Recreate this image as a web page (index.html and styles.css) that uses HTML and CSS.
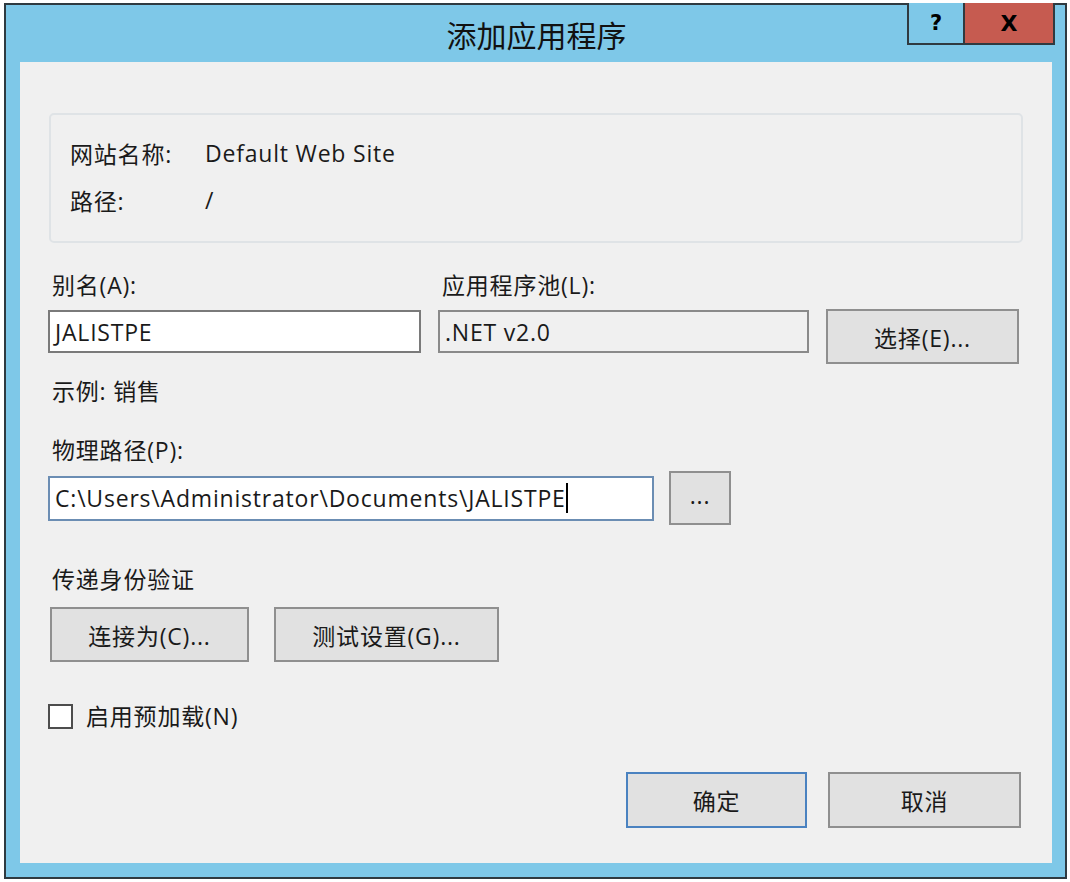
FILE: index.html
```html
<!DOCTYPE html>
<html lang="zh-CN">
<head>
<meta charset="utf-8">
<title>添加应用程序</title>
<link rel="stylesheet" href="styles.css">
</head>
<body>
<div class="window">
  <div class="titlebar">
    <div class="spacer"></div>
    <div class="title">添加应用程序</div>
    <div class="controls">
      <div class="ctl help">?</div>
      <div class="ctl close">X</div>
    </div>
  </div>
  <div class="content">
    <div class="infobox">
      <div class="info-label">网站名称:</div><div class="info-value">Default Web Site</div>
      <div class="info-label">路径:</div><div class="info-value">/</div>
    </div>

    <div class="grid-row">
      <div class="label">别名(A):</div>
      <div class="label">应用程序池(L):</div>
      <div></div>
      <div class="input">JALISTPE</div>
      <div class="input readonly">.NET v2.0</div>
      <div class="btn btn-select">选择(E)...</div>
    </div>

    <div class="label example">示例: 销售</div>

    <div class="label path-label">物理路径(P):</div>
    <div class="path-row">
      <div class="input path focused">C:\Users\Administrator\Documents\JALISTPE<span class="caret"></span></div>
      <div class="btn btn-browse">...</div>
    </div>

    <div class="label auth-label">传递身份验证</div>
    <div class="auth-row">
      <div class="btn btn-connect">连接为(C)...</div>
      <div class="btn btn-test">测试设置(G)...</div>
    </div>

    <div class="check-row">
      <div class="checkbox"></div>
      <div class="label">启用预加载(N)</div>
    </div>

    <div class="footer">
      <div class="btn btn-ok">确定</div>
      <div class="btn btn-cancel">取消</div>
    </div>
  </div>
</div>
</body>
</html>
```

FILE: styles.css
```css
html, body {
  margin: 0;
  padding: 0;
  background: #ffffff;
}
body {
  font-family: "Open Sans", "Noto Sans CJK SC", sans-serif;
  font-size: 23px;
  letter-spacing: 0.8px;
  color: #1a1a1a;
}
.window {
  margin: 3px 0 0 4px;
  width: 1063px;
  height: 876px;
  box-sizing: border-box;
  border: 2px solid #2f3a40;
  background: #7ec8e8;
  padding: 0 13px 14px 14px;
  display: flex;
  flex-direction: column;
}
.titlebar {
  height: 57px;
  display: grid;
  grid-template-columns: 1fr auto 1fr;
  align-items: center;
  margin: 0 -13px 0 -14px;
}
.title {
  font-family: "Noto Sans CJK SC", sans-serif;
  font-size: 30px;
  color: #111;
  letter-spacing: 0;
  padding-left: 2px;
}
.controls {
  justify-self: end;
  align-self: start;
  display: flex;
  margin-top: -2px;
  margin-right: 10px;
}
.ctl {
  height: 42px;
  box-sizing: border-box;
  display: flex;
  align-items: center;
  justify-content: center;
  font-family: "DejaVu Sans", sans-serif;
  font-weight: bold;
  letter-spacing: 0;
  color: #000;
  border: 2px solid #2f3a40;
  border-top: none;
}
.help {
  width: 56px;
  background: #7ec8e8;
  font-size: 21px;
  border-right: none;
}
.close {
  width: 92px;
  background: #c65b50;
  font-size: 22px;
}
.content {
  flex: 1;
  background: #f0f0f0;
  padding: 51px 31px 0 28px;
  display: flex;
  flex-direction: column;
}
.infobox {
  margin-left: 1px;
  width: 974px;
  height: 130px;
  box-sizing: border-box;
  border: 2px solid #dfe3e6;
  border-radius: 5px;
  padding: 14px 0 0 19px;
  display: grid;
  grid-template-columns: 135px 1fr;
  grid-auto-rows: 47px;
  align-items: center;
}
.label {
  line-height: 30px;
  padding-left: 4px;
}
.grid-row {
  margin-top: 27px;
  display: grid;
  grid-template-columns: 373px 371px 193px;
  column-gap: 17px;
  row-gap: 10px;
  align-items: start;
}
.input {
  height: 43px;
  box-sizing: border-box;
  border: 2px solid #7a7a7a;
  background: #ffffff;
  padding-left: 5px;
  display: flex;
  align-items: center;
  white-space: nowrap;
}
.input.readonly {
  background: #f0f0f0;
  border-color: #8a8a8a;
}
.btn {
  box-sizing: border-box;
  height: 55px;
  background: #e1e1e1;
  border: 2px solid #8f8f8f;
  display: flex;
  align-items: center;
  justify-content: center;
  white-space: nowrap;
}
.btn-select {
  margin-top: -1px;
}
.example {
  margin-top: 12px;
}
.path-label {
  margin-top: 29px;
}
.path-row {
  margin-top: 6px;
  display: flex;
  align-items: center;
  gap: 15px;
}
.input.path {
  width: 606px;
  height: 45px;
  border-color: #6b8db3;
}
.caret {
  display: inline-block;
  width: 2px;
  height: 30px;
  background: #000;
  margin-left: 0;
}
.btn-browse {
  width: 62px;
  height: 54px;
  padding-bottom: 6px;
}
.auth-label {
  margin-top: 39px;
}
.auth-row {
  margin-top: 13px;
  margin-left: 2px;
  display: flex;
  gap: 25px;
}
.btn-connect { width: 199px; }
.btn-test { width: 225px; }
.check-row {
  margin-top: 39px;
  display: flex;
  align-items: center;
  gap: 9px;
}
.checkbox {
  width: 25px;
  height: 25px;
  box-sizing: border-box;
  border: 2px solid #4d4d4d;
  background: #fff;
}
.footer {
  margin-top: 41px;
  display: flex;
  justify-content: flex-end;
  gap: 21px;
}
.btn-ok {
  width: 181px;
  height: 56px;
  border-color: #4a82c0;
}
.btn-cancel {
  width: 193px;
  height: 56px;
}
```
